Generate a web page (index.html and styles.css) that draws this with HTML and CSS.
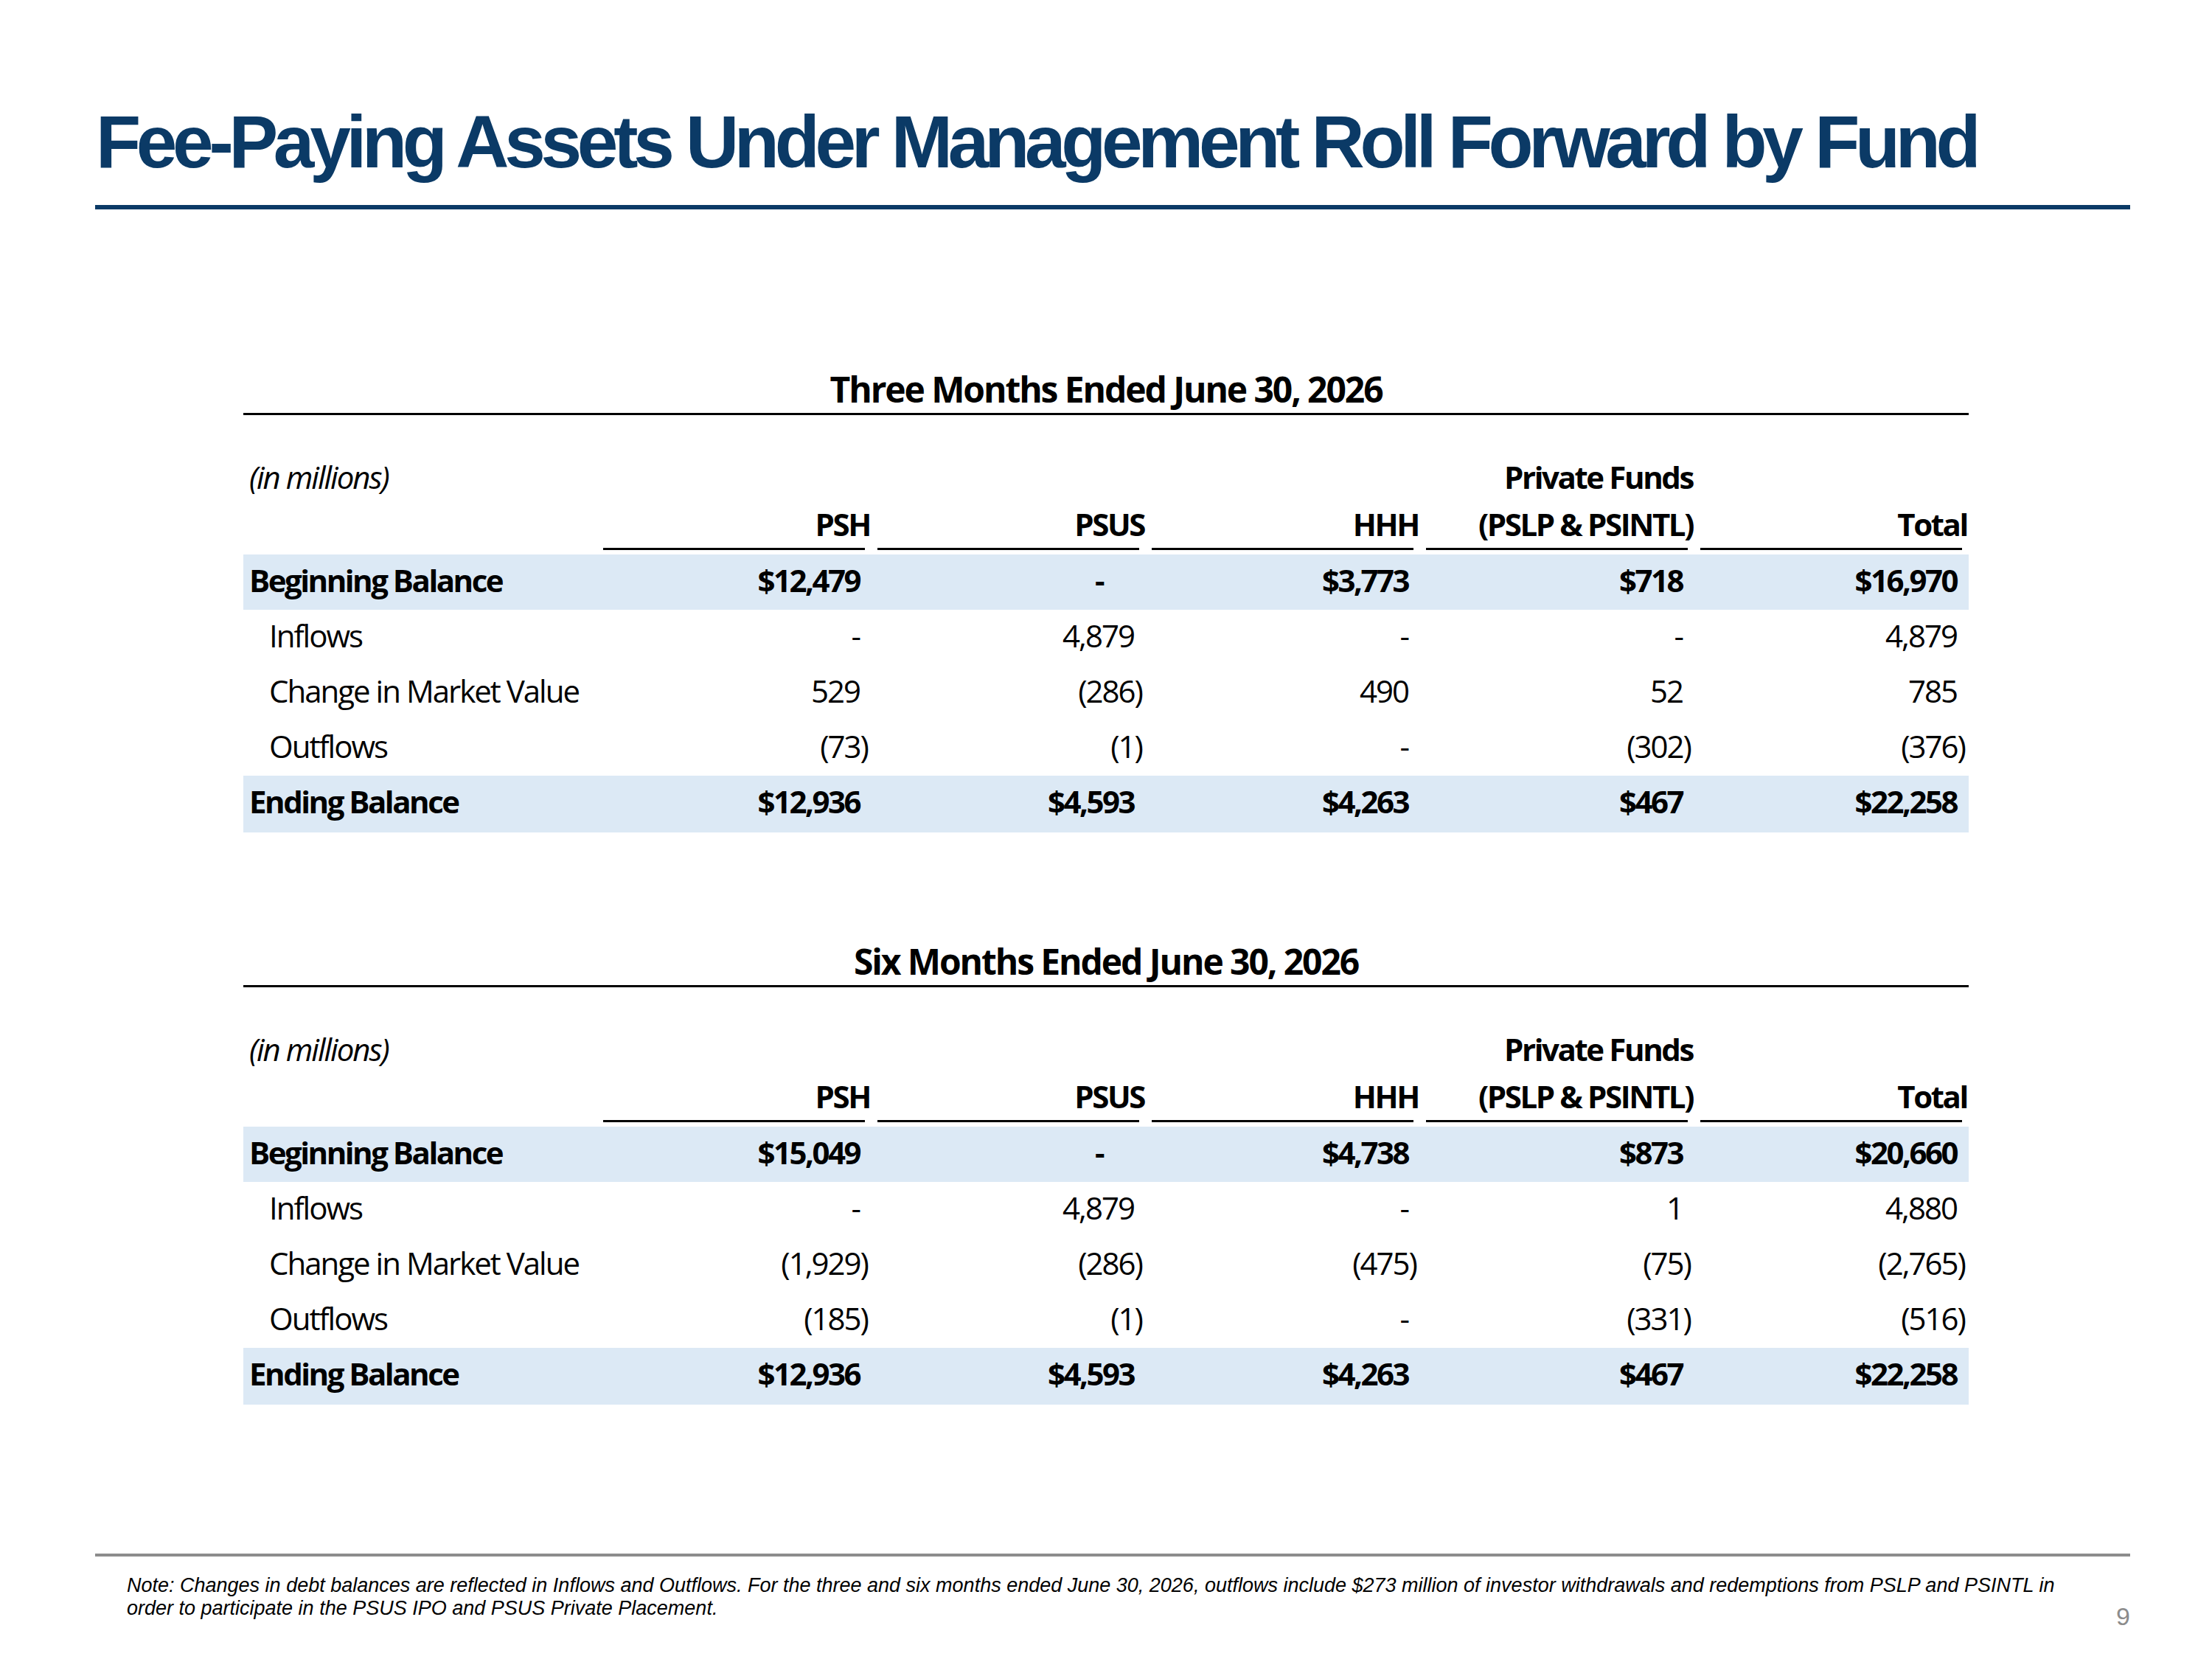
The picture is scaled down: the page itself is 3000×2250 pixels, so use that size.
FILE: index.html
```html
<!DOCTYPE html>
<html lang="en">
<head>
    <meta charset="UTF-8">
    <meta name="viewport" content="width=device-width, initial-scale=1.0">
    <title>Fee-Paying AUM Roll Forward by Fund</title>
    <link rel="stylesheet" href="styles.css">
</head>
<body>
<div class="slide">

    <header class="slide-header">
        <h1 class="slide-title">Fee-Paying Assets Under Management Roll Forward by Fund</h1>
    </header>

    <div class="tables">

        <!-- Three months -->
        <section class="period">
            <div class="period-title">Three Months Ended June 30, 2026</div>
            <table class="roll">
                <colgroup>
                    <col class="c-label"><col><col><col><col><col>
                </colgroup>
                <thead>
                    <tr class="sub">
                        <th class="units">(in millions)</th>
                        <th></th><th></th><th></th>
                        <th class="group">Private Funds</th>
                        <th></th>
                    </tr>
                    <tr class="heads">
                        <th></th>
                        <th class="col"><div class="h"><span class="lbl">PSH</span></div></th>
                        <th class="col"><div class="h"><span class="lbl">PSUS</span></div></th>
                        <th class="col"><div class="h"><span class="lbl">HHH</span></div></th>
                        <th class="col"><div class="h"><span class="lbl">(PSLP &amp; PSINTL)</span></div></th>
                        <th class="col"><div class="h"><span class="lbl">Total</span></div></th>
                    </tr>
                </thead>
                <tbody>
                    <tr class="total">
                        <td class="name">Beginning Balance</td>
                        <td>$12,479</td><td class="zero">-</td><td>$3,773</td><td>$718</td><td>$16,970</td>
                    </tr>
                    <tr>
                        <td class="name">Inflows</td>
                        <td>-</td><td>4,879</td><td>-</td><td>-</td><td>4,879</td>
                    </tr>
                    <tr>
                        <td class="name">Change in Market Value</td>
                        <td>529</td><td class="neg">(286)</td><td>490</td><td>52</td><td>785</td>
                    </tr>
                    <tr>
                        <td class="name">Outflows</td>
                        <td class="neg">(73)</td><td class="neg">(1)</td><td>-</td><td class="neg">(302)</td><td class="neg">(376)</td>
                    </tr>
                    <tr class="total last">
                        <td class="name">Ending Balance</td>
                        <td>$12,936</td><td>$4,593</td><td>$4,263</td><td>$467</td><td>$22,258</td>
                    </tr>
                </tbody>
            </table>
        </section>

        <!-- Six months -->
        <section class="period">
            <div class="period-title">Six Months Ended June 30, 2026</div>
            <table class="roll">
                <colgroup>
                    <col class="c-label"><col><col><col><col><col>
                </colgroup>
                <thead>
                    <tr class="sub">
                        <th class="units">(in millions)</th>
                        <th></th><th></th><th></th>
                        <th class="group">Private Funds</th>
                        <th></th>
                    </tr>
                    <tr class="heads">
                        <th></th>
                        <th class="col"><div class="h"><span class="lbl">PSH</span></div></th>
                        <th class="col"><div class="h"><span class="lbl">PSUS</span></div></th>
                        <th class="col"><div class="h"><span class="lbl">HHH</span></div></th>
                        <th class="col"><div class="h"><span class="lbl">(PSLP &amp; PSINTL)</span></div></th>
                        <th class="col"><div class="h"><span class="lbl">Total</span></div></th>
                    </tr>
                </thead>
                <tbody>
                    <tr class="total">
                        <td class="name">Beginning Balance</td>
                        <td>$15,049</td><td class="zero">-</td><td>$4,738</td><td>$873</td><td>$20,660</td>
                    </tr>
                    <tr>
                        <td class="name">Inflows</td>
                        <td>-</td><td>4,879</td><td>-</td><td>1</td><td>4,880</td>
                    </tr>
                    <tr>
                        <td class="name">Change in Market Value</td>
                        <td class="neg">(1,929)</td><td class="neg">(286)</td><td class="neg">(475)</td><td class="neg">(75)</td><td class="neg">(2,765)</td>
                    </tr>
                    <tr>
                        <td class="name">Outflows</td>
                        <td class="neg">(185)</td><td class="neg">(1)</td><td>-</td><td class="neg">(331)</td><td class="neg">(516)</td>
                    </tr>
                    <tr class="total last">
                        <td class="name">Ending Balance</td>
                        <td>$12,936</td><td>$4,593</td><td>$4,263</td><td>$467</td><td>$22,258</td>
                    </tr>
                </tbody>
            </table>
        </section>

    </div>

    <footer class="slide-footer">
        <p class="note">Note: Changes in debt balances are reflected in Inflows and Outflows. For the three and six months ended June 30, 2026, outflows include $273 million of investor withdrawals and redemptions from PSLP and PSINTL in<br>order to participate in the PSUS IPO and PSUS Private Placement.</p>
        <span class="page-num">9</span>
    </footer>

</div>
</body>
</html>
```

FILE: styles.css
```css
/* Basic Reset */
* {
    margin: 0;
    padding: 0;
    box-sizing: border-box;
}

body {
    background-color: #fff;
    color: #000;
    font-family: "Open Sans", "Noto Sans", sans-serif;
}

.slide {
    width: 3000px;
    height: 2250px;
    padding: 142px 111px 0 129px;
}

/* Title bar */
.slide-header {
    padding-bottom: 36px;
    border-bottom: 6px solid #0b3a66;
}

.slide-title {
    font-family: "Liberation Sans", Arial, sans-serif;
    font-weight: bold;
    font-size: 100px;
    line-height: 100px;
    letter-spacing: -6.3px;
    color: #0b3a66;
    padding-left: 1px;
    white-space: nowrap;
}

/* Roll forward tables */
.tables {
    width: 2340px;
    margin: 216px 0 0 201px;
}

.period + .period {
    margin-top: 147px;
}

.period-title {
    font-weight: 700;
    font-size: 48px;
    line-height: 56px;
    letter-spacing: -2.1px;
    text-align: center;
    padding-bottom: 4px;
    border-bottom: 3px solid #000;
}

.roll {
    width: 100%;
    margin-top: 51px;
    table-layout: fixed;
    border-collapse: collapse;
    font-size: 42px;
    letter-spacing: -2px;
    white-space: nowrap;
}

.roll .c-label {
    width: 480px;
}

.roll th {
    font-weight: 700;
    text-align: right;
    padding: 0;
}

.roll .sub th {
    line-height: 65px;
}

.roll .sub .units {
    text-align: left;
    font-weight: 400;
    font-style: italic;
    padding-left: 8px;
}

.roll .sub .group {
    padding-right: 2px;
    letter-spacing: -2.4px;
}

.roll .heads th {
    padding: 0 0 6px 8px;
}

.roll .heads .h {
    margin-right: 9px;
    line-height: 64px;
    border-bottom: 3px solid #000;
}

.roll .heads .lbl {
    display: inline-block;
    margin-right: -7px;
    letter-spacing: -2.4px;
}

.roll td {
    line-height: 70px;
    padding: 0 16px 5px 0;
    text-align: right;
}

.roll td.neg {
    padding-right: 5px;
}

.roll td.zero {
    padding-right: 58px;
}

.roll td.name {
    text-align: left;
    padding-left: 35px;
}

.roll .total td {
    background-color: #dce9f5;
    font-weight: 700;
    letter-spacing: -2.5px;
}

.roll .total td.name {
    padding-left: 8px;
}

.roll .last td {
    padding-bottom: 7px;
}

/* Footer */
.slide-footer {
    margin-top: 202px;
    padding-top: 24px;
    border-top: 4px solid #8c8c8c;
    display: flex;
    justify-content: space-between;
    font-family: "Liberation Sans", Arial, sans-serif;
}

.note {
    padding-left: 43px;
    font-size: 27px;
    line-height: 31px;
    font-style: italic;
    white-space: nowrap;
}

.page-num {
    margin-top: 40px;
    font-size: 34px;
    line-height: 34px;
    color: #8c8c8c;
}
```
